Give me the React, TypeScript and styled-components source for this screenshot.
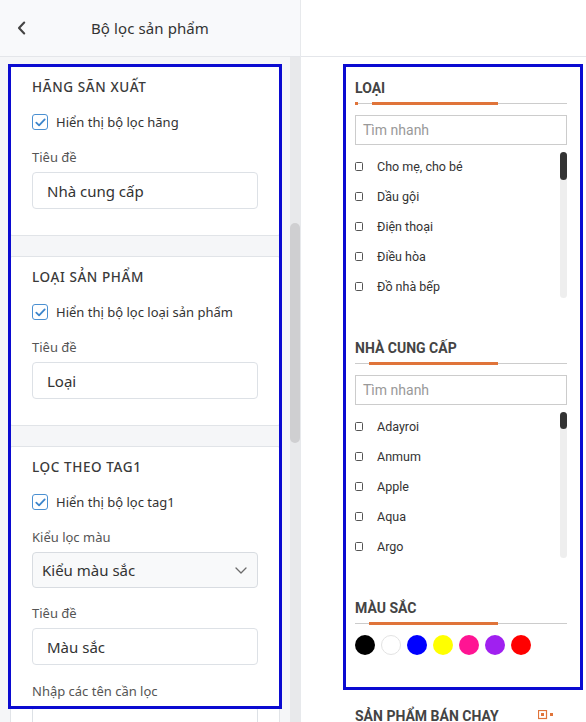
import React from "react";
import styled, { createGlobalStyle } from "styled-components";

const Global = createGlobalStyle`
  html, body { margin: 0; padding: 0; background: #ffffff; }
  * { box-sizing: border-box; }
`;

const Page = styled.div`
  display: flex;
  width: 586px;
  height: 722px;
  overflow: hidden;
  background: #ffffff;
`;

/* ---------- left: settings panel ---------- */

const Settings = styled.aside`
  width: 301px;
  flex: none;
  display: flex;
  flex-direction: column;
  border-right: 1px solid #e7e9ec;
  font-family: "Noto Sans", "Open Sans", sans-serif;
  color: #333;
`;

const Header = styled.header`
  height: 57px;
  flex: none;
  display: flex;
  align-items: center;
  background: #f8f9fb;
  border-bottom: 1px solid #e4e6ea;
`;

const BackButton = styled.button`
  border: 0;
  background: none;
  padding: 0;
  margin-left: 13px;
  width: 16px;
  height: 16px;
  display: flex;
  align-items: center;
  justify-content: center;
  cursor: pointer;
`;

const HeaderTitle = styled.h1`
  flex: 1;
  margin: 0 0 0 -16px;
  padding-right: 13px;
  text-align: center;
  font-size: 15px;
  font-weight: 400;
  color: #333;
  letter-spacing: 0.1px;
`;

const Body = styled.div`
  flex: 1;
  display: flex;
  min-height: 0;
  background: #f5f6f8;
`;

const Scroller = styled.div`
  position: relative;
  flex: 1;
  padding: 9px 10px 0 10px;
  display: flex;
  flex-direction: column;
  gap: 20px;
  overflow: hidden;
`;

const Track = styled.div`
  width: 10px;
  flex: none;
  background: #e8e9eb;
  padding-top: 166px;
`;

const Thumb = styled.div`
  width: 10px;
  height: 220px;
  border-radius: 5px;
  background: #cfcfd1;
`;

const Card = styled.section`
  flex: none;
  background: #ffffff;
  border: 1px solid #e1e4e8;
  border-radius: 2px;
  padding: 10px 21px 26px 21px;
  display: flex;
  flex-direction: column;
`;

const CardTitle = styled.h2`
  margin: 0;
  height: 20px;
  line-height: 20px;
  font-size: 13.5px;
  font-weight: 500;
  letter-spacing: 0.6px;
  color: #3a3a3a;
`;

const CheckRow = styled.label`
  margin-top: 15px;
  height: 20px;
  display: flex;
  align-items: center;
  gap: 8px;
  font-size: 13px;
  color: #333;
`;

const Box = styled.span`
  width: 16px;
  height: 16px;
  flex: none;
  border: 1.5px solid #4a90d2;
  border-radius: 3px;
  display: flex;
  align-items: center;
  justify-content: center;
  background: #fff;
`;

const FieldLabel = styled.div<{ $gap?: number }>`
  margin-top: ${(p) => p.$gap ?? 15}px;
  height: 20px;
  line-height: 20px;
  font-size: 13px;
  color: #555;
`;

const TextBox = styled.div`
  margin-top: 5px;
  height: 37px;
  border: 1px solid #dde1e6;
  border-radius: 4px;
  background: #fff;
  display: flex;
  align-items: center;
  padding-left: 14px;
  font-size: 15px;
  color: #333;
`;

const SelectBox = styled.div`
  margin-top: 5px;
  height: 36px;
  border: 1px solid #d8dce1;
  border-radius: 4px;
  background: #f8f9fa;
  display: flex;
  align-items: center;
  justify-content: space-between;
  padding: 0 10px 0 9px;
  font-size: 15px;
  color: #333;
`;

const Highlight = styled.div`
  position: absolute;
  left: 8px;
  top: 7px;
  width: 274px;
  height: 645px;
  border: 3px solid #0b0bd1;
  pointer-events: none;
`;

/* ---------- right: storefront preview ---------- */

const Preview = styled.main`
  flex: 1;
  display: flex;
  flex-direction: column;
  font-family: Roboto, "Liberation Sans", sans-serif;
  color: #333;
`;

const PreviewBar = styled.div`
  height: 57px;
  flex: none;
  border-bottom: 1px solid #e4e6ea;
`;

const PreviewBody = styled.div`
  padding: 7px 3px 0 42px;
  display: flex;
  flex-direction: column;
`;

const FilterBox = styled.div`
  border: 3px solid #0b0bd1;
  padding: 11px 13px 32px 9px;
  display: flex;
  flex-direction: column;
`;

const Group = styled.div<{ $first?: boolean }>`
  margin-top: ${(p) => (p.$first ? 0 : 37)}px;
  display: flex;
  flex-direction: column;
`;

const GroupTitle = styled.h3`
  margin: 0;
  height: 20px;
  line-height: 20px;
  font-size: 14px;
  font-weight: 700;
  color: #444;
`;

const Rule = styled.div`
  margin-top: 4px;
  height: 3px;
  display: flex;
  align-items: center;
  background: linear-gradient(#cccccc, #cccccc) center / 100% 1px no-repeat;
`;

const RuleDot = styled.span`
  width: 3px;
  height: 3px;
  background: #e0743a;
`;

const RuleBar = styled.span<{ $start: number; $width: number }>`
  margin-left: ${(p) => p.$start}px;
  width: ${(p) => p.$width}px;
  height: 3px;
  background: #e0743a;
`;

const Search = styled.div`
  margin-top: 10px;
  height: 30px;
  border: 1px solid #cccccc;
  display: flex;
  align-items: center;
  padding-left: 7px;
  font-size: 14px;
  color: #999;
`;

const ListWrap = styled.div`
  margin-top: 6px;
  display: flex;
`;

const List = styled.ul`
  flex: 1;
  margin: 0;
  padding: 0;
  list-style: none;
`;

const Item = styled.li`
  height: 30px;
  display: flex;
  align-items: center;
  font-size: 12.5px;
  color: #333;
`;

const ItemBox = styled.span`
  width: 8px;
  height: 9px;
  flex: none;
  border: 1px solid #555;
  border-radius: 1.5px;
  margin-right: 14px;
`;

const MiniTrack = styled.div`
  width: 7px;
  flex: none;
  margin-top: 1px;
  height: 146px;
  border-radius: 4px;
  background: #eeeeee;
`;

const MiniThumb = styled.div<{ $h: number }>`
  height: ${(p) => p.$h}px;
  border-radius: 4px;
  background: #333333;
`;

const Swatches = styled.div`
  margin-top: 10px;
  display: flex;
  gap: 6px;
`;

const Swatch = styled.span<{ $c: string }>`
  width: 20px;
  height: 20px;
  border-radius: 50%;
  background: ${(p) => p.$c};
  border: ${(p) => (p.$c === "#ffffff" ? "1px solid #e3e3e3" : "none")};
`;

const NextTitleRow = styled.div`
  margin-top: 16px;
  padding-left: 12px;
  display: flex;
  align-items: center;
`;

const NextTitle = styled.h3`
  margin: 0;
  font-size: 14px;
  font-weight: 700;
  color: #444;
  height: 20px;
  line-height: 20px;
  width: 183px;
`;

const Check = () => (
  <svg width="11" height="9" viewBox="0 0 11 9">
    <path d="M1.3 4.6 L4.1 7.3 L9.7 1.4" fill="none" stroke="#3d86cc" strokeWidth="1.8" strokeLinecap="round" strokeLinejoin="round" />
  </svg>
);

const ChevronDown = () => (
  <svg width="12" height="7" viewBox="0 0 12 7">
    <path d="M1 1 L6 6 L11 1" fill="none" stroke="#6b6b6b" strokeWidth="1.3" strokeLinecap="round" strokeLinejoin="round" />
  </svg>
);

const ChevronLeft = () => (
  <svg width="9" height="14" viewBox="0 0 9 14">
    <path d="M7.2 1.5 L2 7 L7.2 12.5" fill="none" stroke="#444" strokeWidth="2.1" strokeLinecap="round" strokeLinejoin="round" />
  </svg>
);

const GridIcon = () => (
  <svg width="16" height="12" viewBox="0 0 16 12">
    <rect x="0.5" y="0.5" width="8" height="8" fill="none" stroke="#e0743a" strokeWidth="1.2" />
    <rect x="3" y="3" width="3" height="3" fill="#e0743a" />
    <rect x="12" y="3" width="3" height="3" fill="#e0743a" />
  </svg>
);

type Filter = { title: string; dot?: boolean; start: number; width: number; items: string[]; thumb: number };

const filters: Filter[] = [
  { title: "LOẠI", dot: true, start: 14, width: 126, items: ["Cho mẹ, cho bé", "Dầu gội", "Điện thoại", "Điều hòa", "Đồ nhà bếp"], thumb: 28 },
  { title: "NHÀ CUNG CẤP", start: 14, width: 129, items: ["Adayroi", "Anmum", "Apple", "Aqua", "Argo"], thumb: 17 },
];

const colors = ["#000000", "#ffffff", "#0000ff", "#ffff00", "#ff1493", "#a020f0", "#ff0000"];

function CheckField({ label }: { label: string }) {
  return (
    <CheckRow>
      <Box>
        <Check />
      </Box>
      {label}
    </CheckRow>
  );
}

export default function App() {
  return (
    <Page>
      <Global />
      <Settings>
        <Header>
          <BackButton aria-label="Quay lại">
            <ChevronLeft />
          </BackButton>
          <HeaderTitle>Bộ lọc sản phẩm</HeaderTitle>
        </Header>
        <Body>
          <Scroller>
            <Card>
              <CardTitle>HÃNG SÃN XUẤT</CardTitle>
              <CheckField label="Hiển thị bộ lọc hãng" />
              <FieldLabel>Tiêu đề</FieldLabel>
              <TextBox>Nhà cung cấp</TextBox>
            </Card>
            <Card>
              <CardTitle>LOẠI SẢN PHẨM</CardTitle>
              <CheckField label="Hiển thị bộ lọc loại sản phẩm" />
              <FieldLabel>Tiêu đề</FieldLabel>
              <TextBox>Loại</TextBox>
            </Card>
            <Card>
              <CardTitle>LỌC THEO TAG1</CardTitle>
              <CheckField label="Hiển thị bộ lọc tag1" />
              <FieldLabel>Kiểu lọc màu</FieldLabel>
              <SelectBox>
                Kiểu màu sắc
                <ChevronDown />
              </SelectBox>
              <FieldLabel $gap={15}>Tiêu đề</FieldLabel>
              <TextBox>Màu sắc</TextBox>
              <FieldLabel $gap={16}>Nhập các tên cần lọc</FieldLabel>
              <TextBox />
            </Card>
            <Highlight />
          </Scroller>
          <Track>
            <Thumb />
          </Track>
        </Body>
      </Settings>

      <Preview>
        <PreviewBar />
        <PreviewBody>
          <FilterBox>
            {filters.map((f, i) => (
              <Group key={f.title} $first={i === 0}>
                <GroupTitle>{f.title}</GroupTitle>
                <Rule>
                  {f.dot && <RuleDot />}
                  <RuleBar $start={f.start} $width={f.width} />
                </Rule>
                <Search>Tìm nhanh</Search>
                <ListWrap>
                  <List>
                    {f.items.map((it) => (
                      <Item key={it}>
                        <ItemBox />
                        {it}
                      </Item>
                    ))}
                  </List>
                  <MiniTrack>
                    <MiniThumb $h={f.thumb} />
                  </MiniTrack>
                </ListWrap>
              </Group>
            ))}
            <Group>
              <GroupTitle>MÀU SẮC</GroupTitle>
              <Rule>
                <RuleBar $start={14} $width={129} />
              </Rule>
              <Swatches>
                {colors.map((c) => (
                  <Swatch key={c} $c={c} />
                ))}
              </Swatches>
            </Group>
          </FilterBox>
          <NextTitleRow>
            <NextTitle>SẢN PHẨM BÁN CHẠY</NextTitle>
            <GridIcon />
          </NextTitleRow>
        </PreviewBody>
      </Preview>
    </Page>
  );
}
